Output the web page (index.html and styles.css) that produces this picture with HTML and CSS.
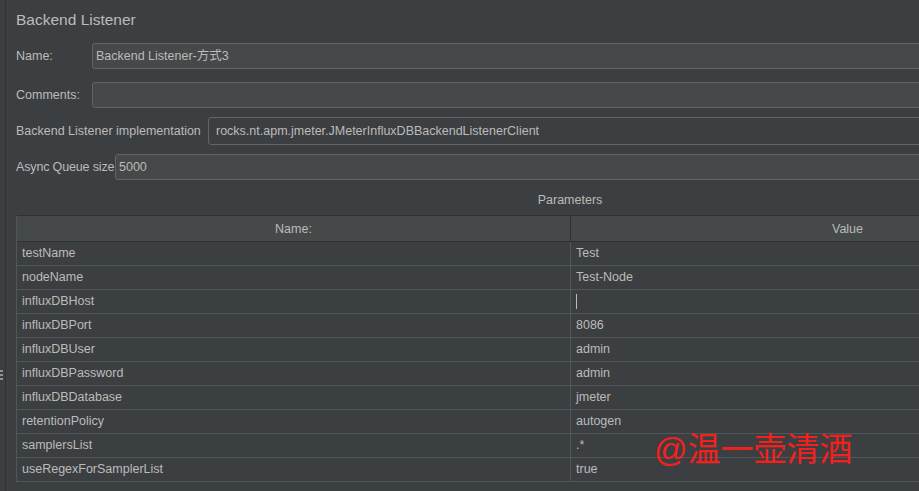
FILE: index.html
```html
<!DOCTYPE html>
<html lang="zh">
<head>
<meta charset="utf-8">
<title>Backend Listener</title>
<link rel="stylesheet" href="styles.css">
</head>
<body>
<div class="app">
  <div class="splitter"><span class="grip"></span></div>
  <main class="panel">
    <h1 class="title">Backend Listener</h1>
    <div class="form-row row-name">
      <label class="label label-short">Name:</label>
      <div class="field">Backend Listener-方式3</div>
    </div>
    <div class="form-row row-comments">
      <label class="label label-short">Comments:</label>
      <div class="field"></div>
    </div>
    <div class="form-row row-impl">
      <label class="label label-impl">Backend Listener implementation</label>
      <div class="field combo">rocks.nt.apm.jmeter.JMeterInfluxDBBackendListenerClient</div>
    </div>
    <div class="form-row row-queue">
      <label class="label label-queue">Async Queue size</label>
      <div class="field">5000</div>
    </div>
    <div class="params-caption">Parameters</div>
    <table class="params">
      <colgroup><col class="col-name"><col class="col-value"></colgroup>
      <thead>
        <tr><th>Name:</th><th>Value</th></tr>
      </thead>
      <tbody>
        <tr><td>testName</td><td>Test</td></tr>
        <tr><td>nodeName</td><td>Test-Node</td></tr>
        <tr><td>influxDBHost</td><td><span class="caret"></span></td></tr>
        <tr><td>influxDBPort</td><td>8086</td></tr>
        <tr><td>influxDBUser</td><td>admin</td></tr>
        <tr><td>influxDBPassword</td><td>admin</td></tr>
        <tr><td>influxDBDatabase</td><td>jmeter</td></tr>
        <tr><td>retentionPolicy</td><td>autogen</td></tr>
        <tr><td>samplersList</td><td>.*</td></tr>
        <tr><td>useRegexForSamplerList</td><td>true</td></tr>
      </tbody>
    </table>
  </main>
  <div class="watermark">@温一壶清酒</div>
</div>
</body>
</html>
```
FILE: styles.css
```css
html, body {
  margin: 0;
  padding: 0;
  background: #3c3f41;
  overflow: hidden;
}

body {
  width: 919px;
  height: 491px;
  font-family: "Liberation Sans", Arial, "Noto Sans CJK SC", sans-serif;
  font-size: 12.5px;
  color: #bbbbbb;
}

.app {
  position: relative;
  display: flex;
  height: 491px;
  overflow: hidden;
}

.splitter {
  flex: none;
  width: 5px;
  border-right: 1px solid #2f3133;
  display: flex;
  flex-direction: column;
}

.grip {
  margin-top: 370px;
  width: 3px;
  height: 11px;
  background: repeating-linear-gradient(#8f9295 0 2px, transparent 2px 4px);
}

.panel {
  flex: none;
  width: 1108px;
  padding-left: 10px;
}

.title {
  margin: 0;
  padding-top: 10px;
  font-size: 15.5px;
  font-weight: normal;
  line-height: 20px;
  color: #bbbbbb;
}

.form-row {
  display: flex;
  align-items: center;
}

.row-name { margin-top: 13px; }
.row-comments { margin-top: 13px; }
.row-impl { margin-top: 9px; }
.row-queue { margin-top: 9px; }

.label {
  flex: none;
  white-space: nowrap;
}

.label-short { width: 76px; }
.label-impl { width: 192px; }
.label-queue { width: 99px; letter-spacing: -0.15px; }

.field {
  flex: 1;
  box-sizing: border-box;
  height: 26px;
  line-height: 24px;
  padding: 0 3px;
  border: 1px solid #646464;
  border-radius: 3px;
  background: #45494a;
  white-space: nowrap;
}

.field.combo {
  height: 28px;
  line-height: 26px;
  padding: 0 7px;
  background: #3c3f41;
}

.params-caption {
  margin-top: 10px;
  line-height: 20px;
  text-align: center;
}

.params {
  margin-top: 5px;
  width: 1108px;
  table-layout: fixed;
  border-collapse: separate;
  border-spacing: 0;
  border-top: 1px solid #2f3133;
  border-left: 1px solid #515658;
}

.col-name { width: 554px; }
.col-value { width: 554px; }

.params th {
  font-weight: normal;
  line-height: 25px;
  padding: 1px 0 0;
  text-align: center;
  background: #45494a;
  border-right: 1px solid #2f3133;
  border-bottom: 1px solid #2f3133;
}

.params thead tr { height: 26px; }

.params th { line-height: 24px; }

.params td {
  line-height: 23px;
  padding: 0 5px;
  text-align: left;
  white-space: nowrap;
  border-right: 1px solid #515658;
  border-bottom: 1px solid #515658;
}

.caret {
  display: inline-block;
  width: 1px;
  height: 15px;
  background: #bbbbbb;
  vertical-align: middle;
}

.watermark {
  position: absolute;
  left: 654px;
  top: 433px;
  font-family: "Liberation Sans", "Noto Sans CJK SC", sans-serif;
  font-size: 33px;
  line-height: 1;
  color: #f5201c;
  white-space: nowrap;
}
```
